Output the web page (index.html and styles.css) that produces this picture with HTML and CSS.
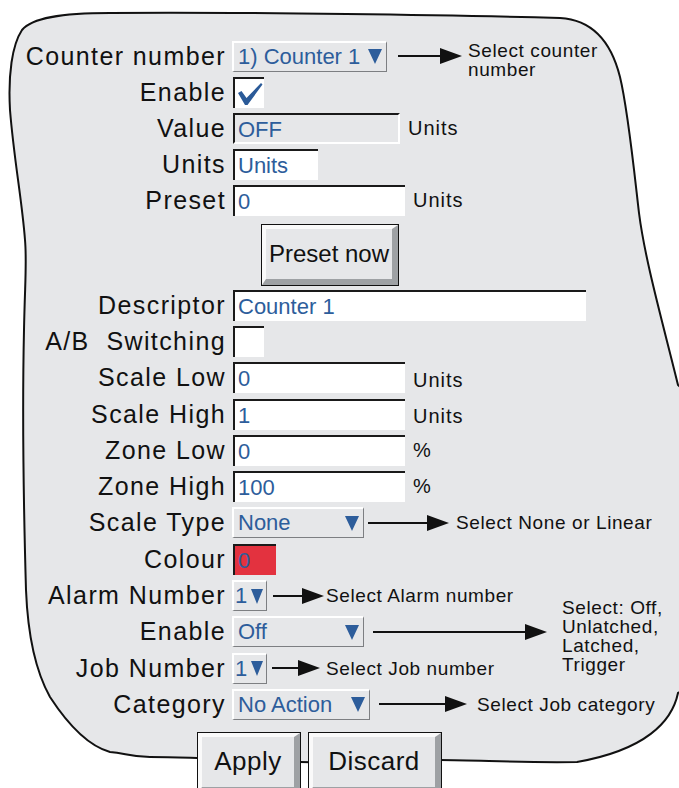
FILE: index.html
```html
<!DOCTYPE html>
<html lang="en">
<head>
    <meta charset="UTF-8" />
    <title>Counter configuration</title>
    <link rel="stylesheet" href="styles.css">
</head>
<body>

<div class="screen">
    <svg class="panel-shape" width="679" height="788" viewBox="0 0 679 788">
        <path d="M110 13 C250 12 450 15 560 18 C595 20 612 45 620 77 C628 110 634 170 639 213 C645 260 662 320 678 385 L720 420 L720 670 L678 693 C672 722 645 750 577 762 C520 763 480 760 440 760 C380 760 330 763 300 762 C260 761 200 757 150 757 C130 757 125 753 110 752 C85 745 65 720 50 697 C36 672 28 640 26 590 C24 520 22 420 24 330 C25 280 27 262 25 240 C22 200 14 160 10 110 C8 75 12 45 22 30 C32 18 60 13 110 13 Z"/>
    </svg>

    <div class="form">
        <div class="row">
            <span class="label">Counter number</span>
            <div class="cell">
                <div class="select select-counter"><span>1) Counter 1</span><i class="caret"></i></div>
                <span class="arrow arrow-counter"></span>
                <span class="note note-stack">Select counter<br>number</span>
            </div>
        </div>
        <div class="row">
            <span class="label">Enable</span>
            <div class="cell">
                <div class="check">
                    <svg width="29" height="29" viewBox="0 0 29 29"><path d="M3 14 L6.5 12 L11.5 19 L26 4 L27.5 5.5 L12.5 26 L10 26 Z"/></svg>
                </div>
            </div>
        </div>
        <div class="row">
            <span class="label">Value</span>
            <div class="cell">
                <div class="field field-readonly w-value">OFF</div>
                <span class="unit">Units</span>
            </div>
        </div>
        <div class="row">
            <span class="label">Units</span>
            <div class="cell">
                <div class="field w-short">Units</div>
            </div>
        </div>
        <div class="row">
            <span class="label">Preset</span>
            <div class="cell">
                <div class="field w-mid">0</div>
                <span class="unit">Units</span>
            </div>
        </div>
        <div class="row row-button">
            <span></span>
            <div class="cell">
                <button class="btn btn-preset">Preset now</button>
            </div>
        </div>
        <div class="row row-lower">
            <span class="label">Descriptor</span>
            <div class="cell">
                <div class="field w-long">Counter 1</div>
            </div>
        </div>
        <div class="row row-lower">
            <span class="label">A/B&nbsp; Switching</span>
            <div class="cell">
                <div class="check"></div>
            </div>
        </div>
        <div class="row row-lower">
            <span class="label">Scale Low</span>
            <div class="cell">
                <div class="field w-mid">0</div>
                <span class="unit unit-low">Units</span>
            </div>
        </div>
        <div class="row row-lower">
            <span class="label">Scale High</span>
            <div class="cell">
                <div class="field w-mid">1</div>
                <span class="unit unit-low">Units</span>
            </div>
        </div>
        <div class="row row-lower">
            <span class="label">Zone Low</span>
            <div class="cell">
                <div class="field w-mid">0</div>
                <span class="unit">%</span>
            </div>
        </div>
        <div class="row row-lower">
            <span class="label">Zone High</span>
            <div class="cell">
                <div class="field w-mid">100</div>
                <span class="unit">%</span>
            </div>
        </div>
        <div class="row row-lower">
            <span class="label">Scale Type</span>
            <div class="cell">
                <div class="select select-wide"><span>None</span><i class="caret"></i></div>
                <span class="arrow arrow-type"></span>
                <span class="note">Select None or Linear</span>
            </div>
        </div>
        <div class="row row-lower">
            <span class="label">Colour</span>
            <div class="cell">
                <div class="field swatch">0</div>
            </div>
        </div>
        <div class="row row-lower">
            <span class="label">Alarm Number</span>
            <div class="cell">
                <div class="select select-small"><span>1</span><i class="caret"></i></div>
                <span class="arrow arrow-alarm"></span>
                <span class="note">Select Alarm number</span>
            </div>
        </div>
        <div class="row row-lower">
            <span class="label">Enable</span>
            <div class="cell">
                <div class="select select-wide"><span>Off</span><i class="caret"></i></div>
                <span class="arrow arrow-enable"></span>
                <span class="note note-stack">Select: Off,<br>Unlatched,<br>Latched,<br>Trigger</span>
            </div>
        </div>
        <div class="row row-lower">
            <span class="label">Job Number</span>
            <div class="cell">
                <div class="select select-small"><span>1</span><i class="caret"></i></div>
                <span class="arrow arrow-job"></span>
                <span class="note">Select Job number</span>
            </div>
        </div>
        <div class="row row-lower">
            <span class="label">Category</span>
            <div class="cell">
                <div class="select select-category"><span>No Action</span><i class="caret"></i></div>
                <span class="arrow arrow-category"></span>
                <span class="note">Select Job category</span>
            </div>
        </div>

        <div class="actions">
            <button class="btn btn-apply">Apply</button>
            <button class="btn btn-discard">Discard</button>
        </div>
    </div>
</div>

</body>
</html>
```

FILE: styles.css
```css
html, body {
    margin: 0;
    overflow: hidden;
    background: #fff;
}
body {
    font-family: "Liberation Sans", Arial, sans-serif;
    color: #111;
}
.screen {
    position: relative;
    width: 679px;
    height: 788px;
    overflow: hidden;
}
.panel-shape {
    position: absolute;
    left: 0;
    top: 0;
}
.panel-shape path {
    fill: #e6e7e9;
    stroke: #111;
    stroke-width: 2;
}
.form {
    position: relative;
    padding-top: 38px;
}
.row {
    display: grid;
    grid-template-columns: 226px 1fr;
    grid-template-rows: minmax(0, 1fr);
    column-gap: 6px;
    align-items: center;
    height: 36px;
}
.row-button {
    height: 69px;
}
.row-lower {
    height: 36.3px;
}
.label {
    text-align: right;
    font-size: 25px;
    letter-spacing: 1.4px;
    white-space: nowrap;
}
.cell {
    display: flex;
    align-items: center;
    min-width: 0;
}

/* text entry boxes */
.field {
    box-sizing: border-box;
    height: 31px;
    margin-left: 1px;
    padding-left: 3px;
    background: #fff;
    border-top: 2px solid #1a1a1a;
    border-left: 2px solid #1a1a1a;
    color: #2d5d9b;
    font-size: 22px;
    line-height: 29px;
    white-space: nowrap;
}
.field-readonly {
    background: #e6e7e9;
    border-right: 2px solid #fff;
    border-bottom: 2px solid #fff;
}
.w-value { width: 167px; }
.w-short { width: 85px; }
.w-mid { width: 172px; }
.w-long { width: 353px; }
.swatch {
    width: 43px;
    background: #e3323f;
}
.unit {
    margin-left: 8px;
    font-size: 20px;
    letter-spacing: 1px;
}
.unit-low {
    padding-top: 5px;
}

.check {
    box-sizing: border-box;
    width: 31px;
    height: 31px;
    margin-left: 1px;
    background: #fff;
    border-top: 2px solid #1a1a1a;
    border-left: 2px solid #1a1a1a;
}
.check svg {
    display: block;
}
.check path {
    fill: #2a5a98;
}

/* drop-downs */
.select {
    box-sizing: border-box;
    height: 31px;
    display: flex;
    align-items: center;
    justify-content: space-between;
    padding: 0 4px;
    background: #e6e7e9;
    border-top: 2px solid #fff;
    border-left: 2px solid #fff;
    border-right: 1px solid #7d7f82;
    border-bottom: 1px solid #7d7f82;
    color: #2d5d9b;
    font-size: 22px;
    white-space: nowrap;
}
.select-counter { width: 155px; }
.select-wide { width: 132px; }
.select-category { width: 138px; }
.select-small {
    width: 35px;
    padding: 0 3px 0 1px;
}
.caret {
    width: 0;
    height: 0;
    border-left: 7px solid transparent;
    border-right: 7px solid transparent;
    border-top: 15px solid #2d5d9b;
}
.select-small .caret {
    border-left-width: 6px;
    border-right-width: 6px;
}

/* callout arrows */
.arrow {
    position: relative;
    flex: none;
    height: 2px;
    background: #111;
}
.arrow::after {
    content: "";
    position: absolute;
    left: 100%;
    top: -7px;
    border-left: 22px solid #111;
    border-top: 8px solid transparent;
    border-bottom: 8px solid transparent;
}
.arrow-counter { margin: 0 28px 0 11px; width: 42px; }
.arrow-type { margin: 0 29px 0 4px; width: 59px; }
.arrow-alarm { margin: 0 24px 0 6px; width: 29px; }
.arrow-enable { margin: 0 37px 0 9px; width: 152px; }
.arrow-job { margin: 0 28px 0 5px; width: 26px; }
.arrow-category { margin: 0 32px 0 9px; width: 66px; }
.note {
    font-size: 19px;
    letter-spacing: 0.6px;
    line-height: 19px;
    white-space: nowrap;
}
.note-stack {
    margin: -36px 0 -44px;
}

/* push buttons */
.btn {
    box-sizing: border-box;
    height: 60px;
    padding: 0;
    background: #e6e7e9;
    border-style: solid;
    border-width: 4px 6px 6px 4px;
    border-color: #fafafa #9ea1a4 #9ea1a4 #fafafa;
    outline: 1px solid #111;
    color: #111;
    font-family: "Liberation Sans", Arial, sans-serif;
    font-size: 24px;
}
.btn-preset {
    width: 136px;
    margin: 4px 0 0 30px;
}
.actions {
    display: flex;
    gap: 9px;
    margin: 10px 0 0 198px;
}
.btn-apply,
.btn-discard {
    font-size: 26px;
    letter-spacing: 0.5px;
}
.btn-apply { width: 102px; }
.btn-discard { width: 132px; }
```
